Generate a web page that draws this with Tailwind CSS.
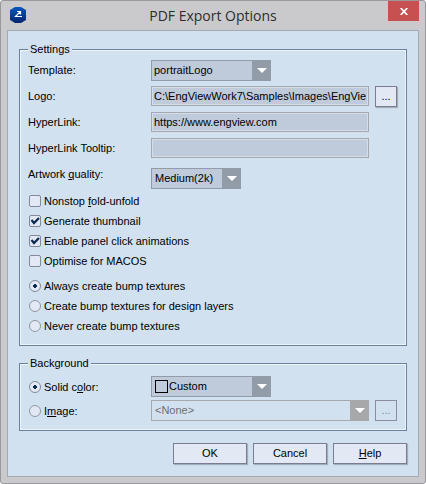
<!DOCTYPE html>
<html lang="en">
<head>
    <meta charset="UTF-8">
    <meta name="viewport" content="width=device-width, initial-scale=1.0">
    <title>PDF Export Options</title>
    <script src="https://cdn.jsdelivr.net/npm/@tailwindcss/browser@4"></script>
</head>
<body class="bg-white">
    <form class="min-h-screen flex flex-col border border-[#99999d] rounded-[3px] bg-[#cacacd] px-1.5 pb-1.5 text-[11px] leading-4 text-black font-['Liberation_Sans',Arial,sans-serif]">
        <!-- Title bar -->
        <header class="relative h-[29px] flex items-center justify-center">
            <svg class="absolute left-[3px] top-1.5 size-4" viewBox="0 0 16 16" aria-hidden="true">
                <defs>
                    <linearGradient id="logo" x1="0" y1="0" x2="0" y2="1">
                        <stop offset="0" stop-color="#0a56c4"/>
                        <stop offset="1" stop-color="#04256c"/>
                    </linearGradient>
                </defs>
                <path d="M5 0h6l5 3v10l-5 3H5l-5-3V3z" fill="url(#logo)"/>
                <path d="M7 4.500h3.500v3M10.500 4.500L5.500 9.500H12" fill="none" stroke="#fff" stroke-width="1.200"/>
            </svg>
            <h1 class="text-[14px] leading-5 text-[#2d2d2d] font-['Open_Sans',sans-serif]">PDF Export Options</h1>
            <button type="button" aria-label="Close" class="absolute right-0 top-0 w-[31px] h-5 bg-[#c75050] flex items-center justify-center">
                <svg class="w-2 h-[7px]" viewBox="0 0 8 7" aria-hidden="true"><path d="M.7 0L7.300 7M7.300 0L.7 7" stroke="#fff" stroke-width="1.700"/></svg>
            </button>
        </header>

        <main class="grow border border-[#a5a9b1] bg-[#d2e1ef] px-[11px] pt-2.5 pb-2.5">
            <fieldset class="border border-[#6782a0] shadow-[inset_0_0_0_1px_#eef4f8] px-2 pt-[3px] pb-[9px]">
                <legend class="bg-[#d2e1ef] px-0.5">Settings</legend>
                <div class="flex flex-col gap-[5px]">
                    <div class="flex">
                        <label for="template" class="w-[123px] leading-[21px]">Template:</label>
                        <div class="relative w-[120px]">
                            <select id="template" class="block appearance-none w-full h-[21px] border border-[#929ca9] bg-[#bfcadb] pl-0.5 pr-5 leading-[19px]">
                                <option>portraitLogo</option>
                            </select>
                            <span class="absolute right-0 top-0 w-[19px] h-[21px] bg-[#929ca9] flex items-center justify-center pointer-events-none">
                                <svg class="w-2.5 h-[5px]" viewBox="0 0 10 5" aria-hidden="true"><path d="M0 0h10L5 5z" fill="#fff"/></svg>
                            </span>
                        </div>
                    </div>
                    <div class="flex">
                        <label for="logo-path" class="w-[123px] leading-[21px]">Logo:</label>
                        <input id="logo-path" type="text" value="C:\EngViewWork7\Samples\Images\EngVie" class="w-[218px] h-5 border border-[#a5a9ae] bg-[#bfcadb] shadow-[inset_0_0_0_1px_#d2deea] px-0.5">
                        <button type="button" aria-label="Browse logo" class="ml-1.5 w-[22px] h-[21px] border border-[#7b7b92] bg-[#e2e8f4] shadow-[1px_1px_1px_#a3afbd] leading-[19px]">...</button>
                    </div>
                    <div class="flex">
                        <label for="hyperlink" class="w-[123px] leading-[21px]">HyperLink:</label>
                        <input id="hyperlink" type="text" value="https://www.engview.com" class="w-[218px] h-5 border border-[#a5a9ae] bg-[#bfcadb] shadow-[inset_0_0_0_1px_#d2deea] px-0.5">
                    </div>
                    <div class="flex">
                        <label for="tooltip" class="w-[123px] leading-[21px]">HyperLink Tooltip:</label>
                        <input id="tooltip" type="text" value="" class="w-[218px] h-5 border border-[#a5a9ae] bg-[#bfcadb] shadow-[inset_0_0_0_1px_#d2deea] px-0.5">
                    </div>
                    <div class="flex">
                        <label for="quality" class="w-[123px] leading-[21px]">Artwork <u>q</u>uality:</label>
                        <div class="relative mt-1 w-[90px]">
                            <select id="quality" class="block appearance-none w-full h-[21px] border border-[#929ca9] bg-[#bfcadb] pl-[3px] pr-5 leading-[19px]">
                                <option>Medium(2k)</option>
                            </select>
                            <span class="absolute right-0 top-0 w-[19px] h-[21px] bg-[#929ca9] flex items-center justify-center pointer-events-none">
                                <svg class="w-2.5 h-[5px]" viewBox="0 0 10 5" aria-hidden="true"><path d="M0 0h10L5 5z" fill="#fff"/></svg>
                            </span>
                        </div>
                    </div>
                </div>

                <div class="mt-0.5 flex flex-col items-start">
                    <label class="h-5 flex items-center gap-[3px] pl-px">
                        <input type="checkbox" class="appearance-none size-3 rounded-[2px] border border-[#83899a] bg-[#e2e8f4]">
                        <span>Nonstop <u>f</u>old-unfold</span>
                    </label>
                    <label class="h-5 flex items-center gap-[3px] pl-px">
                        <span class="relative flex">
                            <input type="checkbox" checked class="peer appearance-none size-3 rounded-[2px] border border-[#83899a] bg-[#e2e8f4]">
                            <svg class="absolute inset-0 size-3 hidden peer-checked:block pointer-events-none" viewBox="0 0 12 12" aria-hidden="true"><path d="M2.500 5L5 8L10 3" fill="none" stroke="#0b2a50" stroke-width="2.200"/></svg>
                        </span>
                        <span>Generate thumbnail</span>
                    </label>
                    <label class="h-5 flex items-center gap-[3px] pl-px">
                        <span class="relative flex">
                            <input type="checkbox" checked class="peer appearance-none size-3 rounded-[2px] border border-[#83899a] bg-[#e2e8f4]">
                            <svg class="absolute inset-0 size-3 hidden peer-checked:block pointer-events-none" viewBox="0 0 12 12" aria-hidden="true"><path d="M2.500 5L5 8L10 3" fill="none" stroke="#0b2a50" stroke-width="2.200"/></svg>
                        </span>
                        <span>Enable panel click animations</span>
                    </label>
                    <label class="h-5 flex items-center gap-[3px] pl-px">
                        <input type="checkbox" class="appearance-none size-3 rounded-[2px] border border-[#83899a] bg-[#e2e8f4]">
                        <span>Optimise for MACOS</span>
                    </label>
                </div>

                <div class="mt-[5px] flex flex-col items-start">
                    <label class="h-5 flex items-center gap-[3px] pl-px">
                        <input type="radio" name="bump" checked class="appearance-none size-3 rounded-full border border-[#83899a] bg-[#e2e8f4] checked:bg-[radial-gradient(circle,#0b2a50_0_2px,#e2e8f4_2px)]">
                        <span>Always create bump textures</span>
                    </label>
                    <label class="h-5 flex items-center gap-[3px] pl-px">
                        <input type="radio" name="bump" class="appearance-none size-3 rounded-full border border-[#9297a3] bg-[#e2e8f4] checked:bg-[radial-gradient(circle,#0b2a50_0_2px,#e2e8f4_2px)]">
                        <span>Create bump textures for design layers</span>
                    </label>
                    <label class="h-5 flex items-center gap-[3px] pl-px">
                        <input type="radio" name="bump" class="appearance-none size-3 rounded-full border border-[#9297a3] bg-[#e2e8f4] checked:bg-[radial-gradient(circle,#0b2a50_0_2px,#e2e8f4_2px)]">
                        <span>Never create bump textures</span>
                    </label>
                </div>
            </fieldset>

            <fieldset class="mt-[9px] border border-[#6782a0] shadow-[inset_0_0_0_1px_#eef4f8] px-2 pt-[5px] pb-[9px]">
                <legend class="bg-[#d2e1ef] px-0.5">Background</legend>
                <div class="flex flex-col gap-[3px]">
                    <div class="flex">
                        <label class="w-[123px] flex items-center gap-[3px] pl-px">
                            <input type="radio" name="background" checked class="appearance-none size-3 rounded-full border border-[#83899a] bg-[#e2e8f4] checked:bg-[radial-gradient(circle,#0b2a50_0_2px,#e2e8f4_2px)]">
                            <span>Solid c<u>o</u>lor:</span>
                        </label>
                        <div class="relative w-[120px]">
                            <select aria-label="Solid color" class="block appearance-none w-full h-[21px] border border-[#929ca9] bg-[#bfcadb] pl-[17px] pr-5 leading-[19px]">
                                <option>Custom</option>
                            </select>
                            <span class="absolute left-1 top-1 w-[13px] h-[13px] border border-black pointer-events-none"></span>
                            <span class="absolute right-0 top-0 w-[19px] h-[21px] bg-[#929ca9] flex items-center justify-center pointer-events-none">
                                <svg class="w-2.5 h-[5px]" viewBox="0 0 10 5" aria-hidden="true"><path d="M0 0h10L5 5z" fill="#fff"/></svg>
                            </span>
                        </div>
                    </div>
                    <div class="flex">
                        <label class="w-[123px] flex items-center gap-[3px] pl-px">
                            <input type="radio" name="background" class="appearance-none size-3 rounded-full border border-[#9297a3] bg-[#e2e8f4] checked:bg-[radial-gradient(circle,#0b2a50_0_2px,#e2e8f4_2px)]">
                            <span>I<u>m</u>age:</span>
                        </label>
                        <div class="relative w-[218px]">
                            <select aria-label="Image" disabled class="block appearance-none w-full h-[21px] border border-[#a6a8aa] bg-[#d2e1ef] text-[#6b6f74] pl-[3px] pr-5 leading-[19px] opacity-100">
                                <option>&lt;None&gt;</option>
                            </select>
                            <span class="absolute right-0 top-0 w-[19px] h-[21px] bg-[#a6a8aa] flex items-center justify-center pointer-events-none">
                                <svg class="w-2.5 h-[5px]" viewBox="0 0 10 5" aria-hidden="true"><path d="M0 0h10L5 5z" fill="#fff"/></svg>
                            </span>
                        </div>
                        <button type="button" disabled aria-label="Browse image" class="ml-1.5 w-[22px] h-[21px] border border-[#8a8c9f] text-[#85898f] leading-[19px]">...</button>
                    </div>
                </div>
            </fieldset>

            <div class="mt-3 flex justify-end gap-1.5">
                <button type="submit" class="w-[74px] h-[21px] border border-[#7b7b92] bg-[#e2e8f4] shadow-[1px_1px_1px_#a3afbd] leading-[19px]">OK</button>
                <button type="button" class="w-[74px] h-[21px] border border-[#7b7b92] bg-[#e2e8f4] shadow-[1px_1px_1px_#a3afbd] leading-[19px]">Cancel</button>
                <button type="button" class="w-[74px] h-[21px] border border-[#7b7b92] bg-[#e2e8f4] shadow-[1px_1px_1px_#a3afbd] leading-[19px]"><u>H</u>elp</button>
            </div>
        </main>
    </form>
</body>
</html>
